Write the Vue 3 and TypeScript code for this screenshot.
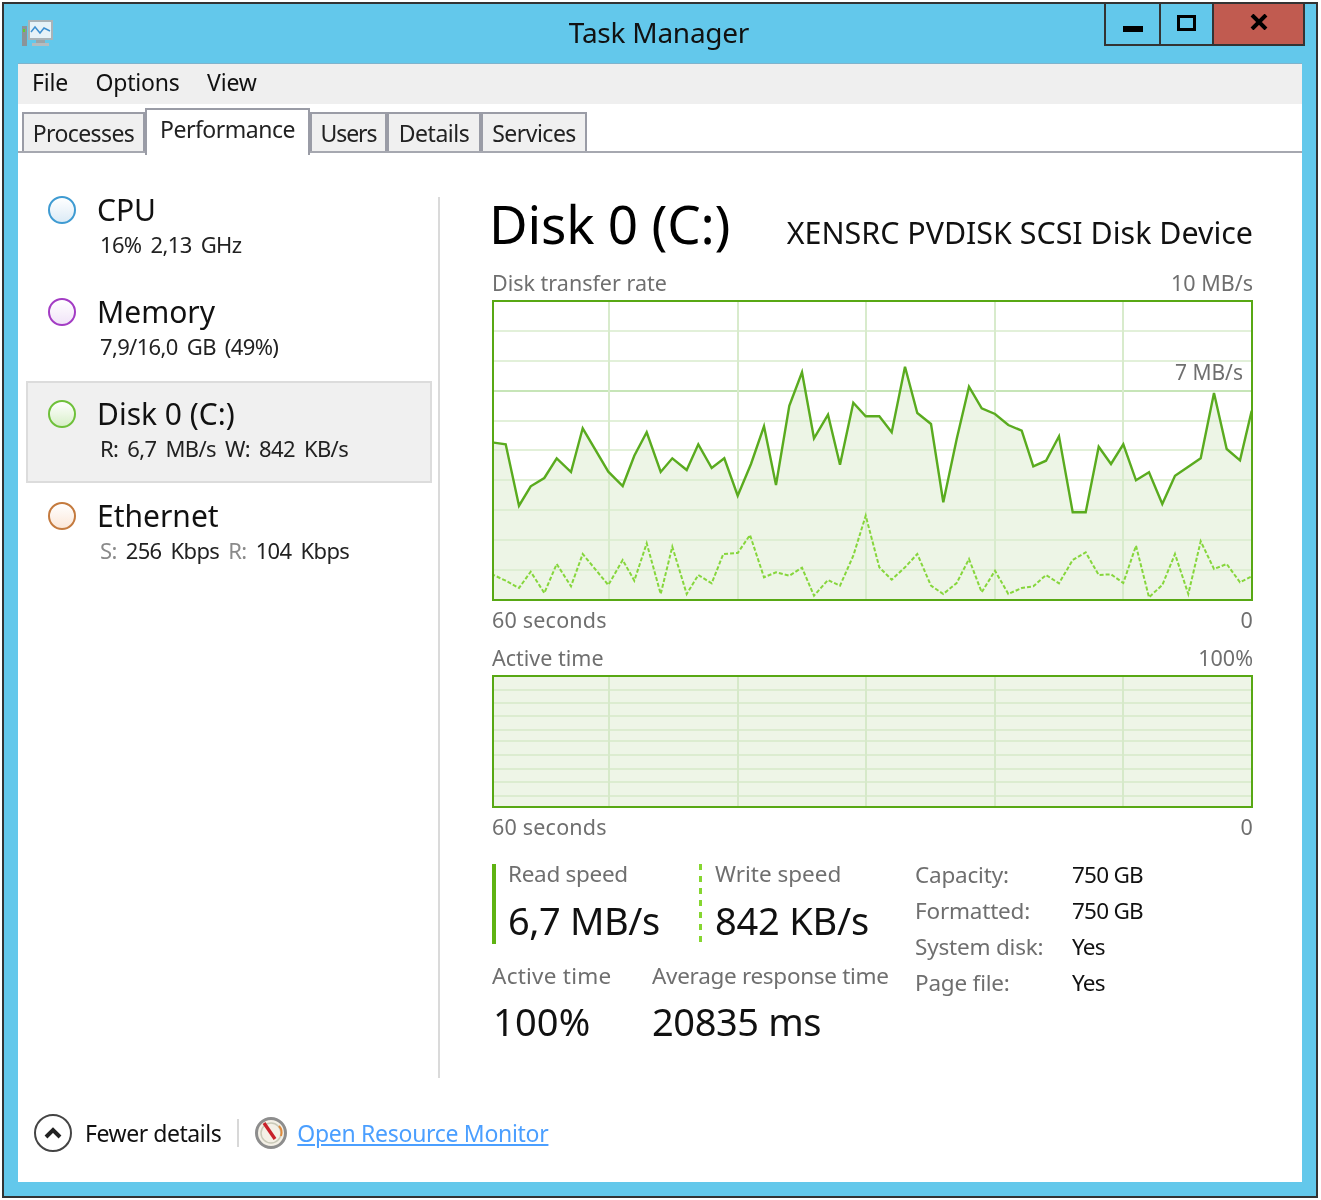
<script setup lang="ts">
const z3 = (p: number[][]) => p.map(([x, y]) => [490 + x / 3, 300 + y / 3])
const z4 = (p: number[][]) => p.map(([x, y]) => [860 + x / 3, 300 + y / 3])
const read = [
  ...z3([[4,430],[47,436],[87,620],[122,562],[163,537],[200,478],[243,519],[278,388],[355,518],[398,561],[433,470],[470,400],[512,519],[547,478],[590,513],[625,436],[665,507],[703,478],[743,590],[783,495],[822,382],[858,558],[898,320],[936,220],[972,418],[1014,347],[1050,497],[1090,311],[1127,352]]),
  ...z4([[58,352],[95,400],[135,203],[172,342],[213,375],[250,610],[290,420],[327,263],[365,328],[405,345],[445,378],[485,395],[520,502],[558,485],[597,412],[638,640],[677,640],[716,443],[753,495],[790,436],[828,544],[867,520],[907,615],[945,530],[985,503],[1022,478],[1062,282],[1100,450],[1140,484],[1175,335]]),
]
const write = [
  ...z3([[4,825],[47,845],[87,867],[122,818],[163,882],[200,795],[243,862],[278,765],[355,858],[398,783],[433,845],[470,733],[512,885],[547,743],[590,885],[625,828],[665,853],[700,765],[743,762],[780,708],[822,835],[858,820],[898,830],[936,806],[972,890],[1014,843],[1050,860],[1090,770],[1127,650]]),
  ...z4([[58,805],[95,842],[135,805],[172,765],[213,860],[250,885],[290,852],[327,780],[365,880],[405,815],[445,885],[485,867],[520,862],[558,828],[597,853],[638,783],[677,760],[716,828],[753,826],[790,852],[828,740],[867,895],[907,858],[945,765],[985,885],[1022,727],[1062,810],[1100,795],[1140,850],[1175,832]]),
]
const str = (p: number[][]) => p.map(([x, y]) => `${x.toFixed(1)},${y.toFixed(1)}`).join(' ')
const readLine = str(read)
const writeLine = str(write)
const area = `493,601 ${readLine} 1252,601`
const verticals = [609, 738, 866, 995, 1123]
const rateRows = [332, 362, 392, 422, 451, 481, 511, 541, 571]
const activeRows = [691, 704, 717, 731, 742, 756, 770, 783, 797]

const devices = [
  { name: 'CPU', cls: 'cpu', sel: false, parts: [['', '16% 2,13 GHz']] },
  { name: 'Memory', cls: 'mem', sel: false, parts: [['', '7,9/16,0 GB (49%)']] },
  { name: 'Disk 0 (C:)', cls: 'disk', sel: true, parts: [['', 'R: 6,7 MB/s W: 842 KB/s']] },
  { name: 'Ethernet', cls: 'eth', sel: false, parts: [['S: ', '256 Kbps '], ['R: ', '104 Kbps']] },
]
const tabs = [
  { t: 'Processes', w: 123, cls: 'processes' },
  { t: 'Performance', w: 165, cls: 'on' },
  { t: 'Users', w: 77, cls: 'users' },
  { t: 'Details', w: 94, cls: 'details' },
  { t: 'Services', w: 106, cls: 'services' },
]
const props = [
  ['Capacity:', '750 GB'],
  ['Formatted:', '750 GB'],
  ['System disk:', 'Yes'],
  ['Page file:', 'Yes'],
]
</script>

<template>
  <div class="window">
    <header class="titlebar">
      <svg class="appicon" width="34" height="32" viewBox="0 0 34 32">
        <rect x="2" y="8" width="5" height="20" fill="#8b9499" />
        <rect x="3" y="11" width="2" height="3" fill="#5fd02c" />
        <rect x="8" y="2" width="25" height="20" fill="#a9b3b8" />
        <rect x="10" y="4" width="21" height="16" fill="#e6f2f8" />
        <polyline points="11,14 15,9 20,15 24,10 30,13" fill="none" stroke="#3d8fd0" stroke-width="1.5" />
        <rect x="16" y="22" width="9" height="3" fill="#9aa5aa" />
        <rect x="12" y="25" width="17" height="3" fill="#b4bcc0" />
      </svg>
      <span class="wintitle">Task Manager</span>
      <div class="controls">
        <div class="ctl min"><span class="minbar"></span></div>
        <div class="ctl max"><span class="maxbox"></span></div>
        <div class="ctl close">
          <svg width="18" height="16" viewBox="0 0 18 16"><path d="M2 1 L16 15 M16 1 L2 15" stroke="#000" stroke-width="4" /></svg>
        </div>
      </div>
    </header>

    <div class="client">
      <nav class="menu"><span>File</span><span>Options</span><span>View</span></nav>
      <div class="tabs">
        <div v-for="t in tabs" :key="t.t" class="tab" :class="t.cls" :style="{ width: t.w + 'px' }">{{ t.t }}</div>
      </div>

      <main class="main">
        <aside class="devices">
          <div v-for="d in devices" :key="d.name" class="device" :class="{ sel: d.sel }">
            <span class="ring" :class="d.cls"></span>
            <div class="devtext">
              <div class="devname">{{ d.name }}</div>
              <div class="devsub"><template v-for="p in d.parts" :key="p[1]"><span class="dim">{{ p[0] }}</span>{{ p[1] }}</template></div>
            </div>
          </div>
        </aside>
        <div class="divider"></div>

        <section class="detail">
          <div class="head">
            <h1>Disk 0 (C:)</h1>
            <div class="model">XENSRC PVDISK SCSI Disk Device</div>
          </div>

          <div class="caprow cap-top"><span>Disk transfer rate</span><span>10 MB/s</span></div>
          <div class="chart rate">
            <svg width="761" height="301" viewBox="492 301 761 301">
              <polygon :points="area" fill="#edf5e6" />
              <line v-for="y in rateRows" :key="y" x1="493" x2="1252" :y1="y" :y2="y" :stroke="y === 392 ? '#b4dca0' : '#d8ebcc'" stroke-width="1.5" />
              <line v-for="x in verticals" :key="x" :x1="x" :x2="x" y1="302" y2="601" stroke="#d8ebcc" stroke-width="2" />
              <polyline :points="readLine" fill="none" stroke="#5aab1f" stroke-width="2.4" />
              <polyline :points="writeLine" fill="none" stroke="#86d63c" stroke-width="2" stroke-dasharray="4 2" />
              <rect x="493" y="302" width="759" height="299" fill="none" stroke="#58a814" stroke-width="2" />
            </svg>
            <span class="overlay">7 MB/s</span>
          </div>
          <div class="caprow cap-bot"><span>60 seconds</span><span>0</span></div>

          <div class="caprow cap-active"><span>Active time</span><span>100%</span></div>
          <div class="chart active">
            <svg width="761" height="133" viewBox="492 676 761 133">
              <rect x="493" y="677" width="759" height="131" fill="#eef5e7" />
              <line v-for="y in activeRows" :key="y" x1="493" x2="1252" :y1="y" :y2="y" stroke="#d6e9c9" stroke-width="1.5" />
              <line v-for="x in verticals" :key="x" :x1="x" :x2="x" y1="677" y2="808" stroke="#d6e9c9" stroke-width="2" />
              <rect x="493" y="677" width="759" height="131" fill="none" stroke="#58a814" stroke-width="2" />
            </svg>
          </div>
          <div class="caprow cap-bot"><span>60 seconds</span><span>0</span></div>

          <div class="stats">
            <div class="live">
              <div class="speeds">
                <div class="speed solid">
                  <div class="lab">Read speed</div>
                  <div class="val">6,7 MB/s</div>
                </div>
                <div class="speed dashed">
                  <div class="lab">Write speed</div>
                  <div class="val">842 KB/s</div>
                </div>
              </div>
              <div class="times">
                <div class="time t1">
                  <div class="lab">Active time</div>
                  <div class="val">100%</div>
                </div>
                <div class="time">
                  <div class="lab">Average response time</div>
                  <div class="val">20835 ms</div>
                </div>
              </div>
            </div>
            <dl class="props">
              <template v-for="p in props" :key="p[0]">
                <dt>{{ p[0] }}</dt>
                <dd>{{ p[1] }}</dd>
              </template>
            </dl>
          </div>
        </section>
      </main>

      <footer class="footer">
        <svg class="chev" width="40" height="40" viewBox="0 0 40 40">
          <circle cx="20" cy="20" r="18" fill="#fff" stroke="#444" stroke-width="2" />
          <path d="M13 24 L20 17 L27 24" fill="none" stroke="#222" stroke-width="4" />
        </svg>
        <span class="fewer">Fewer details</span>
        <span class="sep"></span>
        <svg class="gauge" width="32" height="34" viewBox="0 0 32 34">
          <circle cx="16" cy="17" r="14.5" fill="#f4f0e6" stroke="#8d8d8d" stroke-width="3" />
          <circle cx="16" cy="17" r="10" fill="none" stroke="#c9c9b8" stroke-width="1.5" />
          <path d="M24 10 A10 10 0 0 1 26 20" fill="none" stroke="#e08a3c" stroke-width="2" />
          <path d="M9 7 L20 23" stroke="#c8202a" stroke-width="3.4" />
        </svg>
        <a class="link">Open Resource Monitor</a>
      </footer>
    </div>
  </div>
</template>

<style>
html, body { margin: 0; background: #fff; }
</style>

<style scoped>
.window {
  box-sizing: border-box;
  width: 1316px;
  height: 1196px;
  margin: 2px 0 0 2px;
  border: 2px solid #333;
  background: #63c8eb;
  padding: 0 14px 14px 14px;
  display: flex;
  flex-direction: column;
  font-family: "Noto Sans", "Open Sans", sans-serif;
  color: #111;
  filter: blur(0.35px);
}
.titlebar {
  position: relative;
  height: 60px;
  flex: none;
  display: flex;
  align-items: center;
  justify-content: center;
}
.appicon { position: absolute; left: 2px; top: 14px; }
.wintitle { font-size: 28px; letter-spacing: -0.25px; line-height: 60px; position: relative; top: -2px; left: -1px; }
.controls {
  position: absolute;
  right: -3px;
  top: 0;
  display: flex;
  height: 40px;
  border: solid #333;
  border-width: 0 2px 2px 2px;
}
.ctl { display: flex; align-items: center; justify-content: center; }
.min { width: 53px; border-right: 2px solid #333; }
.max { width: 51px; border-right: 2px solid #333; }
.close { width: 89px; background: #c15b50; padding-bottom: 4px; box-sizing: border-box; }
.minbar { width: 20px; height: 6px; background: #000; margin-top: 10px; }
.maxbox { width: 13px; height: 10px; border: 3.5px solid #000; margin-bottom: 3px; }
.client {
  flex: 1;
  background: #fff;
  display: flex;
  flex-direction: column;
  box-shadow: 0 -1px 0 #7fb3cc;
  min-height: 0;
}
.menu {
  height: 40px;
  flex: none;
  background: #efefef;
  display: flex;
  align-items: center;
  gap: 27.5px;
  padding: 0 0 4px 14px;
  box-sizing: border-box;
  font-size: 23px;
  letter-spacing: -0.2px;
}
.tabs {
  height: 49px;
  flex: none;
  display: flex;
  align-items: flex-end;
  padding-left: 4px;
  border-bottom: 2px solid #a6a8b0;
  box-sizing: border-box;
}
.tab {
  box-sizing: border-box;
  height: 39px;
  background: #f0f0f0;
  border: 2px solid #9a9ca6;
  border-bottom: 0;
  text-align: center;
  font-size: 23px;
  letter-spacing: -0.5px;
  line-height: 38px;
  color: #222;
}
.tab.processes { letter-spacing: -0.6px; }
.tab.users { letter-spacing: -1.1px; }
.tab.on {
  height: 47px;
  background: #fff;
  margin-bottom: -4px;
  position: relative;
  z-index: 1;
}
.main { flex: 1; display: flex; min-height: 0; }
.devices { width: 406px; margin: 24px 0 0 8px; flex: none; }
.device {
  box-sizing: border-box;
  height: 102px;
  padding: 16px 0 0 20px;
  display: flex;
  gap: 21px;
  border: 2px solid transparent;
}
.device.sel { background: #f0f0f0; border-color: #dcdcdc; }
.ring {
  width: 28px;
  height: 28px;
  box-sizing: border-box;
  border-radius: 50%;
  border: 2px solid;
  flex: none;
  margin-top: 1px;
}
.cpu { border-color: #3f9bd2; background: linear-gradient(180deg, #fff, #dcebf6); }
.mem { border-color: #a33cc4; background: linear-gradient(180deg, #fff, #f1e4f8); }
.disk { border-color: #6ec03a; background: linear-gradient(180deg, #fff, #d8efc9); }
.eth { border-color: #c47a3e; background: linear-gradient(180deg, #fff, #fbe7d8); }
.devtext { margin-top: -1px; }
.devname { font-size: 30px; line-height: 32px; }
.devsub { font-size: 22px; line-height: 34px; margin: 1px 0 0 3px; letter-spacing: -0.65px; word-spacing: 4px; white-space: pre; color: #222; }
.dim { color: #8a8a8a; }
.divider { width: 2px; height: 881px; margin: 44px 0 0 6px; background: #dadada; flex: none; }
.detail { width: 761px; margin-left: 52px; flex: none; }
.head {
  display: flex;
  justify-content: space-between;
  align-items: baseline;
  height: 80px;
  margin-top: 36px;
}
h1 { margin: 0 0 0 -3px; font-size: 53px; font-weight: 400; line-height: 70px; letter-spacing: -0.2px; color: #000; }
.model { font-size: 30.4px; color: #111; }
.caprow {
  display: flex;
  justify-content: space-between;
  font-size: 21.5px;
  line-height: 28px;
  color: #6f6f6f;
}
.cap-top { height: 31px; }
.cap-bot { height: 28px; margin-top: 5px; letter-spacing: 0.2px; }
.cap-active { height: 28px; margin-top: 10px; margin-bottom: 3px; }
.chart { position: relative; line-height: 0; }
.chart svg { display: block; }
.overlay {
  position: absolute;
  right: 10px;
  top: 59px;
  font-size: 21px;
  line-height: 26px;
  color: #6f6f6f;
}
.stats { display: flex; margin-top: 23px; }
.live { width: 423px; flex: none; }
.speeds { display: flex; }
.speed { height: 80px; flex: none; }
.solid { width: 197px; border-left: 4px solid #5fb312; padding-left: 12px; box-sizing: border-box; margin-right: 10px; }
.dashed {
  padding-left: 16px;
  background: repeating-linear-gradient(180deg, #86d631 0 6px, transparent 6px 12px) left top / 3px 100% no-repeat;
}
.dashed .lab { letter-spacing: 0; }
.dashed .val { letter-spacing: -0.2px; }
.speed .lab { margin-top: -1px; }
.speed .val { margin-top: 10px; }
.lab { font-size: 22.5px; line-height: 22px; letter-spacing: -0.3px; color: #6f6f6f; white-space: nowrap; }
.val { font-size: 38px; line-height: 50px; letter-spacing: -0.4px; margin-top: 9px; white-space: nowrap; color: #111; }
.times { display: flex; margin-top: 21px; }
.time { flex: none; }
.t1 { width: 160px; }
.t1 .lab { letter-spacing: 0.25px; }
.t1 .val { letter-spacing: 0.2px; margin-left: 1px; }
.props {
  margin: -8px 0 0;
  display: grid;
  grid-template-columns: 157px auto;
  grid-auto-rows: 36px;
  align-items: center;
  font-size: 22.5px;
}
dt { color: #6f6f6f; letter-spacing: -0.2px; }
dd { margin: 0; color: #111; letter-spacing: -0.75px; }
.footer {
  height: 102px;
  flex: none;
  display: flex;
  align-items: center;
  padding: 4px 0 0 15px;
  box-sizing: border-box;
  font-size: 23px;
  letter-spacing: -0.45px;
}
.fewer { margin-left: 12px; color: #111; }
.sep { width: 2px; height: 28px; background: #d8d8d8; margin: 0 16px; }
.gauge { margin-right: 10px; }
.link { color: #4b9fff; text-decoration: underline; letter-spacing: -0.3px; }
</style>
